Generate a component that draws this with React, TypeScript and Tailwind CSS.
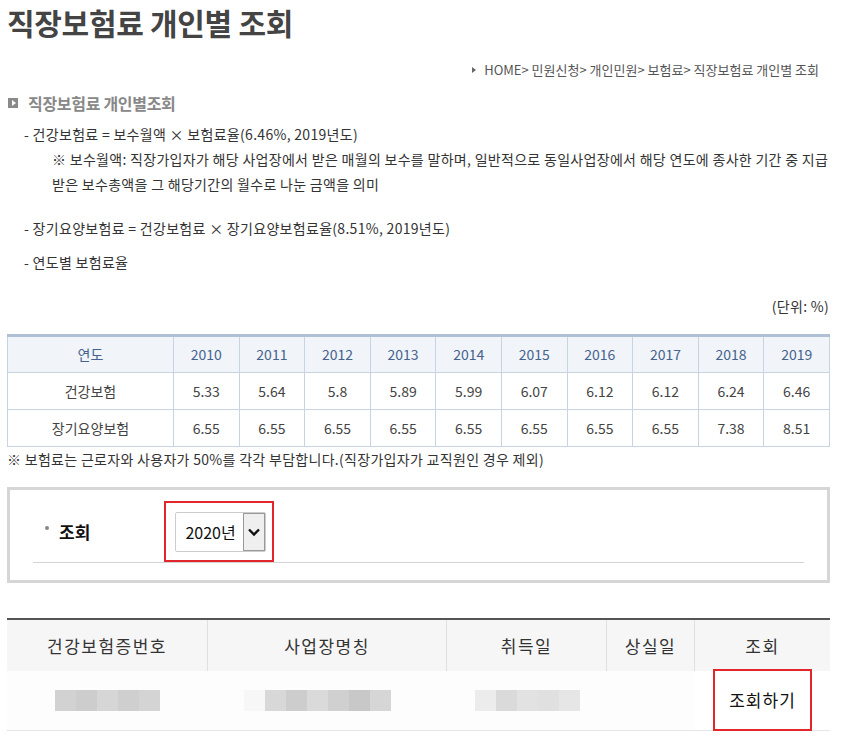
import React from "react";

const years = ["2010","2011","2012","2013","2014","2015","2016","2017","2018","2019"];
const health = ["5.33","5.64","5.8","5.89","5.99","6.07","6.12","6.12","6.24","6.46"];
const ltc = ["6.55","6.55","6.55","6.55","6.55","6.55","6.55","6.55","7.38","8.51"];

function Mosaic({ shades }: { shades: string[] }) {
  return (
    <div className="flex">
      {shades.map((s, i) => (
        <div key={i} className="w-[21px] h-[21px]" style={{ backgroundColor: s }} />
      ))}
    </div>
  );
}

export default function App() {
  return (
    <div
      className="w-[851px] h-[747px] overflow-hidden bg-white text-[#333]"
      style={{ fontFamily: '"Noto Sans CJK KR", "Noto Sans", sans-serif' }}
    >
      <h1 className="pt-[2px] h-[42px] leading-[40px] pl-[7px] text-[30px] font-bold text-[#444] tracking-[-0.3px]">
        직장보험료 개인별 조회
      </h1>

      <div className="mt-[18px] h-[20px] flex items-center justify-end pr-[32px] text-[13px] text-[#555]">
        <span className="mr-[8px] w-0 h-0 border-y-[3px] border-y-transparent border-l-[4px] border-l-[#666]" />
        <span>HOME&gt; 민원신청&gt; 개인민원&gt; 보험료&gt; 직장보험료 개인별 조회</span>
      </div>

      <div className="mt-[12px] h-[22px] flex items-center pl-[8px]">
        <span className="w-[10px] h-[10px] bg-[#8a8a8a] flex items-center justify-center">
          <span className="w-0 h-0 border-y-[3px] border-y-transparent border-l-[4px] border-l-white ml-[1px]" />
        </span>
        <span className="ml-[10px] text-[16px] font-bold text-[#888] tracking-[-0.3px]">직장보험료 개인별조회</span>
      </div>

      <div className="mt-[8px] text-[14px] text-[#333] tracking-[0.3px]">
        <div className="pl-[24px] h-[25px] leading-[25px]">- 건강보험료 = 보수월액 × 보험료율(6.46%, 2019년도)</div>
        <div className="pl-[52px] h-[25px] leading-[25px] whitespace-nowrap">
          ※ 보수월액: 직장가입자가 해당 사업장에서 받은 매월의 보수를 말하며, 일반적으로 동일사업장에서 해당 연도에 종사한 기간 중 지급
        </div>
        <div className="pl-[52px] h-[25px] leading-[25px]">받은 보수총액을 그 해당기간의 월수로 나눈 금액을 의미</div>
        <div className="mt-[19px] pl-[24px] h-[25px] leading-[25px]">- 장기요양보험료 = 건강보험료 × 장기요양보험료율(8.51%, 2019년도)</div>
        <div className="mt-[9px] pl-[24px] h-[25px] leading-[25px]">- 연도별 보험료율</div>
        <div className="mt-[19px] pr-[22px] h-[25px] leading-[25px] text-right">(단위: %)</div>
      </div>

      <div className="mt-[15px] mx-[7px] w-[823px]">
        <table className="w-full border-collapse text-[14px] table-fixed">
          <colgroup>
            <col className="w-[166px]" />
            {years.map((y) => (
              <col key={y} />
            ))}
          </colgroup>
          <thead>
            <tr className="h-[37px] bg-[#f1f4f8]">
              <th className="font-normal text-[#45638e] border border-[#c9d4e2] border-t-[#b0c0d4] border-t-[3px]">연도</th>
              {years.map((y) => (
                <th key={y} className="font-normal text-[#45638e] border border-[#c9d4e2] border-t-[#b0c0d4] border-t-[3px]">{y}</th>
              ))}
            </tr>
          </thead>
          <tbody>
            <tr className="h-[37px]">
              <td className="text-center text-[#444] border border-[#c9d4e2]">건강보험</td>
              {health.map((v, i) => (
                <td key={i} className="text-center text-[#444] border border-[#c9d4e2]">{v}</td>
              ))}
            </tr>
            <tr className="h-[37px]">
              <td className="text-center text-[#444] border border-[#c9d4e2]">장기요양보험</td>
              {ltc.map((v, i) => (
                <td key={i} className="text-center text-[#444] border border-[#c9d4e2]">{v}</td>
              ))}
            </tr>
          </tbody>
        </table>
        <div className="h-[24px] leading-[24px] text-[14px] text-[#333] tracking-[0.3px]">
          ※ 보험료는 근로자와 사용자가 50%를 각각 부담합니다.(직장가입자가 교직원인 경우 제외)
        </div>
      </div>

      <div className="mt-[16px] mx-[7px] w-[823px] h-[96px] border-[3px] border-[#d6d6d6] px-[23px] pt-[12px]">
        <div className="flex items-end h-[61px] border-b border-[#d3d3d3]">
          <div className="flex items-center h-[61px] w-[131px] pl-[12px]">
            <span className="w-[4px] h-[4px] rounded-full bg-[#888] mr-[10px] -mt-[8px]" />
            <span className="text-[17px] font-bold text-[#111]">조회</span>
          </div>
          <div className="h-[61px] w-[110px] border-2 border-[#e3262d] flex items-center pl-[9px]">
            <div className="h-[40px] w-[91px] border border-[#ccc] rounded-[2px] flex items-stretch bg-white">
              <span className="flex-1 flex items-center justify-center text-[16px] text-[#111] pl-[2px]">2020년</span>
              <span className="w-[22px] bg-[#efefef] border border-[#999] flex items-center justify-center">
                <svg width="14" height="10" viewBox="0 0 14 10">
                  <path d="M2 2.5 L7 7.5 L12 2.5" fill="none" stroke="#111" strokeWidth="2.4" />
                </svg>
              </span>
            </div>
          </div>
        </div>
      </div>

      <div className="mt-[35px] mx-[7px] w-[823px]">
        <div className="flex h-[53px] bg-[#f6f6f6] border-t-2 border-[#555] text-[17px] text-[#333] tracking-[1.5px]">
          <div className="w-[201px] flex items-center justify-center border-r border-[#e0e0e0]">건강보험증번호</div>
          <div className="w-[239px] flex items-center justify-center border-r border-[#e0e0e0]">사업장명칭</div>
          <div className="w-[160px] flex items-center justify-center border-r border-[#e0e0e0]">취득일</div>
          <div className="w-[88px] flex items-center justify-center border-r border-[#e0e0e0]">상실일</div>
          <div className="flex-1 flex items-center justify-center">조회</div>
        </div>
        <div className="flex h-[60px] border-b border-[#e6e6e6] text-[17px] text-[#111]">
          <div className="w-[201px] flex items-center pl-[48px] bg-[#fdfdfd]">
            <Mosaic shades={["#d2d2d2", "#cdcdcd", "#d6d6d6", "#cfcfcf", "#d4d4d4"]} />
          </div>
          <div className="w-[239px] flex items-center pl-[36px] bg-[#fdfdfd]">
            <div className="flex">
              <div className="w-[21px] h-[21px] bg-[#f7f7f7]" />
              <Mosaic shades={["#d8d8d8", "#cdcdcd", "#dadada", "#d0d0d0", "#c8c8c8", "#d6d6d6"]} />
            </div>
          </div>
          <div className="w-[160px] flex items-center pl-[28px] bg-[#fdfdfd]">
            <Mosaic shades={["#ececec", "#dadada", "#e2e2e2", "#e0e0e0", "#e6e6e6"]} />
          </div>
          <div className="w-[88px] bg-[#fdfdfd]" />
          <div className="flex-1 flex items-center justify-center">
            <div className="w-[99px] h-[62px] -mt-[1px] border-2 border-[#e3262d] flex items-center justify-center tracking-[1px]">
              조회하기
            </div>
          </div>
        </div>
      </div>
    </div>
  );
}
